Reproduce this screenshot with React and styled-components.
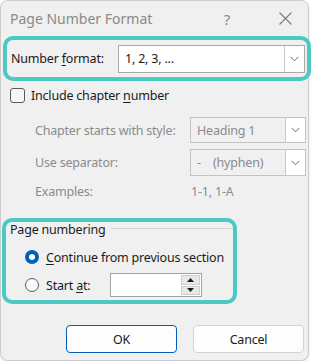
import React from "react";
import styled, { createGlobalStyle } from "styled-components";

const Global = createGlobalStyle`
  html, body { margin: 0; padding: 0; background: #ffffff; }
  body { font-family: "Noto Sans", "Open Sans", sans-serif; }
`;

const Window = styled.div`
  width: 309px;
  height: 361px;
  box-sizing: border-box;
  background: #f0f0f0;
  border: 1px solid #cdcdcd;
  border-radius: 8px;
  box-shadow: 0 1px 3px rgba(0, 0, 0, 0.12);
  display: flex;
  flex-direction: column;
  font-family: "Noto Sans", "Open Sans", sans-serif;
  font-size: 12.5px;
  letter-spacing: -0.2px;
  color: #1b1b1b;
`;

const TitleBar = styled.div`
  height: 35px;
  display: flex;
  align-items: center;
  padding-left: 9px;
  flex-shrink: 0;
`;

const Title = styled.div`
  flex: 1;
  font-size: 14px;
  letter-spacing: 0;
  color: #8a8a8a;
`;

const Help = styled.div`
  width: 14px;
  font-size: 15px;
  color: #8a8a8a;
  margin-right: 44px;
  text-align: center;
`;

const CloseBox = styled.div`
  width: 14px;
  height: 14px;
  margin-right: 16px;
  display: flex;
  align-items: center;
  justify-content: center;
`;

const Highlight = styled.div`
  box-sizing: border-box;
  border: 4px solid #4cc9c3;
  border-radius: 10px;
  height: ${(p) => p.$h}px;
  width: ${(p) => p.$w || "auto"};
  margin-left: ${(p) => p.$ml}px;
  margin-right: ${(p) => p.$mr || 0}px;
  margin-top: ${(p) => p.$mt || 0}px;
  flex-shrink: 0;
`;

const FormatRow = styled.div`
  display: flex;
  align-items: center;
  height: 100%;
  padding-left: 4px;
`;

const Label = styled.div`
  width: ${(p) => p.$w}px;
  flex-shrink: 0;
  color: ${(p) => (p.$disabled ? "#8b8b8b" : "#1b1b1b")};
  white-space: nowrap;
`;

const Key = styled.span`
  text-decoration: underline;
  text-underline-offset: 2px;
`;

const SelectBox = styled.div`
  box-sizing: border-box;
  width: ${(p) => p.$w}px;
  height: ${(p) => p.$h}px;
  display: flex;
  align-items: stretch;
  border: 1px solid ${(p) => (p.$disabled ? "#c4c4c4" : "#a9a9a9")};
  background: ${(p) => (p.$disabled ? "#f0f0f0" : "#ffffff")};
  color: ${(p) => (p.$disabled ? "#8b8b8b" : "#1b1b1b")};
`;

const SelectValue = styled.div`
  flex: 1;
  display: flex;
  align-items: center;
  padding-left: 6px;
  white-space: pre;
`;

const SelectArrow = styled.div`
  width: 19px;
  border-left: 1px solid #c8c8c8;
  background: #ffffff;
  display: flex;
  align-items: center;
  justify-content: center;
`;

const CheckRow = styled.div`
  display: flex;
  align-items: center;
  height: 15px;
  margin-top: 7px;
  padding-left: 9px;
  gap: 6px;
  flex-shrink: 0;
`;

const CheckBox = styled.div`
  box-sizing: border-box;
  width: 15px;
  height: 15px;
  border: 1px solid #5a5a5a;
  border-radius: 3px;
  background: #f6f6f6;
`;

const Options = styled.div`
  display: flex;
  flex-direction: column;
  padding-left: 34px;
  margin-top: 14px;
  gap: 6px;
  flex-shrink: 0;
`;

const OptionRow = styled.div`
  display: flex;
  align-items: center;
  height: ${(p) => p.$h}px;
  margin-top: ${(p) => p.$mt || 0}px;
`;

const ExampleValue = styled.div`
  color: #8b8b8b;
  padding-left: 1px;
`;

const GroupInner = styled.div`
  display: flex;
  flex-direction: column;
  padding-left: 4px;
`;

const Legend = styled.div`
  display: flex;
  align-items: center;
  height: 14px;
  gap: 6px;
`;

const LegendLine = styled.div`
  flex: 1;
  height: 1px;
  background: #d6d6d6;
  margin-top: -1px;
`;

const RadioRow = styled.div`
  display: flex;
  align-items: center;
  height: ${(p) => p.$h}px;
  margin-top: ${(p) => p.$mt}px;
  padding-left: 15px;
  white-space: nowrap;
`;

const Radio = styled.div`
  box-sizing: border-box;
  width: 14px;
  height: 14px;
  border-radius: 50%;
  flex-shrink: 0;
  margin-right: 7px;
  background: ${(p) => (p.$checked ? "#005fb8" : "#f8f8f8")};
  border: ${(p) => (p.$checked ? "none" : "1px solid #5c5c5c")};
  display: flex;
  align-items: center;
  justify-content: center;
  &::after {
    content: "";
    display: ${(p) => (p.$checked ? "block" : "none")};
    width: 6px;
    height: 6px;
    border-radius: 50%;
    background: #ffffff;
  }
`;

const Spin = styled.div`
  box-sizing: border-box;
  width: 92px;
  height: 24px;
  border: 1px solid #a3a3a3;
  background: #ffffff;
  display: flex;
  justify-content: flex-end;
  padding: 1px;
`;

const SpinButtons = styled.div`
  width: 19px;
  display: flex;
  flex-direction: column;
  gap: 1px;
`;

const SpinButton = styled.div`
  flex: 1;
  background: #e8e8e8;
  border: 1px solid #cfcfcf;
  display: flex;
  align-items: center;
  justify-content: center;
`;

const Buttons = styled.div`
  display: flex;
  justify-content: flex-end;
  gap: 16px;
  padding-right: 4px;
  margin-top: 21px;
`;

const Button = styled.div`
  box-sizing: border-box;
  width: 111px;
  height: 28px;
  border-radius: 4px;
  background: #fdfdfd;
  border: 1px solid ${(p) => (p.$primary ? "#005fb8" : "#d3d3d3")};
  display: flex;
  align-items: center;
  justify-content: center;
  color: #1b1b1b;
`;

const Chevron = () => (
  <svg width="9" height="6" viewBox="0 0 9 6">
    <path d="M0.5 0.8 L4.5 4.8 L8.5 0.8" fill="none" stroke="#6a6a6a" strokeWidth="1" />
  </svg>
);

const CloseIcon = () => (
  <svg width="13" height="13" viewBox="0 0 13 13">
    <path d="M0.5 0.5 L12.5 12.5 M12.5 0.5 L0.5 12.5" stroke="#7a7a7a" strokeWidth="1.1" />
  </svg>
);

const Tri = ({ up }) => (
  <svg width="7" height="4" viewBox="0 0 7 4">
    <path d={up ? "M0 4 L3.5 0 L7 4 Z" : "M0 0 L3.5 4 L7 0 Z"} fill="#1b1b1b" />
  </svg>
);

const Select = ({ w, h, value, disabled }) => (
  <SelectBox $w={w} $h={h} $disabled={disabled}>
    <SelectValue>{value}</SelectValue>
    <SelectArrow>
      <Chevron />
    </SelectArrow>
  </SelectBox>
);

export default function App() {
  return (
    <>
      <Global />
      <Window>
        <TitleBar>
          <Title>Page Number Format</Title>
          <Help>?</Help>
          <CloseBox>
            <CloseIcon />
          </CloseBox>
        </TitleBar>

        <Highlight $h={45} $ml={2} $mr={-3}>
          <FormatRow>
            <Label $w={107}>
              Number <Key>f</Key>ormat:
            </Label>
            <Select w={187} h={28} value="1, 2, 3, ..." />
          </FormatRow>
        </Highlight>

        <CheckRow>
          <CheckBox />
          <span>
            Include chapter <Key>n</Key>umber
          </span>
        </CheckRow>

        <Options>
          <OptionRow $h={26}>
            <Label $w={155} $disabled>Chapter starts with style:</Label>
            <Select w={116} h={26} value="Heading 1" disabled />
          </OptionRow>
          <OptionRow $h={27}>
            <Label $w={155} $disabled>Use separator:</Label>
            <Select w={116} h={27} value="-    (hyphen)" disabled />
          </OptionRow>
          <OptionRow $h={20} $mt={-1}>
            <Label $w={155} $disabled>Examples:</Label>
            <ExampleValue>1-1, 1-A</ExampleValue>
          </OptionRow>
        </Options>

        <Highlight $h={86} $ml={1} $w="235px" $mt={17}>
          <GroupInner>
            <Legend>
              <span>Page numbering</span>
              <LegendLine />
            </Legend>
            <RadioRow $h={20} $mt={11}>
              <Radio $checked />
              <span>
                <Key>C</Key>ontinue from previous section
              </span>
            </RadioRow>
            <RadioRow $h={24} $mt={6}>
              <Radio />
              <Label $w={64}>
                Start <Key>a</Key>t:
              </Label>
              <Spin>
                <SpinButtons>
                  <SpinButton>
                    <Tri up />
                  </SpinButton>
                  <SpinButton>
                    <Tri />
                  </SpinButton>
                </SpinButtons>
              </Spin>
            </RadioRow>
          </GroupInner>
        </Highlight>

        <Buttons>
          <Button $primary>OK</Button>
          <Button>Cancel</Button>
        </Buttons>
      </Window>
    </>
  );
}
